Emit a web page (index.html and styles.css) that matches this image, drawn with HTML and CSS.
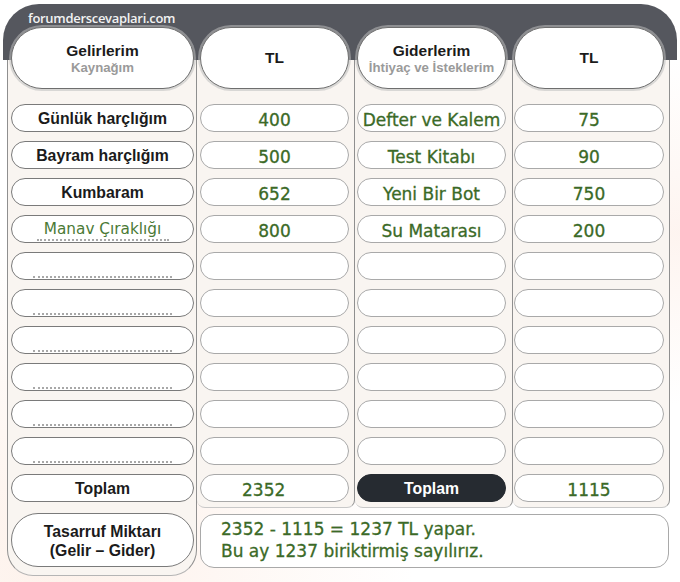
FILE: index.html
```html
<!DOCTYPE html>
<html lang="tr">
<head>
<meta charset="utf-8">
<title>Gelir Gider Tablosu</title>
<link rel="stylesheet" href="styles.css">
</head>
<body>
<div class="page">
  <div class="band"><span class="site">forumderscevaplari.com</span></div>
  <div class="sheet">
    <div class="col c1">
      <div class="head"><span class="h-title">Gelirlerim</span><span class="h-sub">Kaynağım</span></div>
      <div class="pill lbl">Günlük harçlığım</div>
      <div class="pill lbl">Bayram harçlığım</div>
      <div class="pill lbl">Kumbaram</div>
      <div class="pill lbl"><span class="dots filled">Manav Çıraklığı</span></div>
      <div class="pill lbl"><span class="dots"></span></div>
      <div class="pill lbl"><span class="dots"></span></div>
      <div class="pill lbl"><span class="dots"></span></div>
      <div class="pill lbl"><span class="dots"></span></div>
      <div class="pill lbl"><span class="dots"></span></div>
      <div class="pill lbl"><span class="dots"></span></div>
      <div class="pill lbl">Toplam</div>
      <div class="pill lbl big">Tasarruf Miktarı<br>(Gelir – Gider)</div>
    </div>
    <div class="right">
      <div class="cols">
        <div class="col c2">
          <div class="head"><span class="h-title">TL</span></div>
          <div class="pill val">400</div>
          <div class="pill val">500</div>
          <div class="pill val">652</div>
          <div class="pill val">800</div>
          <div class="pill val"></div>
          <div class="pill val"></div>
          <div class="pill val"></div>
          <div class="pill val"></div>
          <div class="pill val"></div>
          <div class="pill val"></div>
          <div class="pill val left">2352</div>
        </div>
        <div class="col c3">
          <div class="head"><span class="h-title">Giderlerim</span><span class="h-sub">İhtiyaç ve İsteklerim</span></div>
          <div class="pill val">Defter ve Kalem</div>
          <div class="pill val">Test Kitabı</div>
          <div class="pill val">Yeni Bir Bot</div>
          <div class="pill val">Su Matarası</div>
          <div class="pill val"></div>
          <div class="pill val"></div>
          <div class="pill val"></div>
          <div class="pill val"></div>
          <div class="pill val"></div>
          <div class="pill val"></div>
          <div class="pill dark">Toplam</div>
        </div>
        <div class="col c4">
          <div class="head"><span class="h-title">TL</span></div>
          <div class="pill val">75</div>
          <div class="pill val">90</div>
          <div class="pill val">750</div>
          <div class="pill val">200</div>
          <div class="pill val"></div>
          <div class="pill val"></div>
          <div class="pill val"></div>
          <div class="pill val"></div>
          <div class="pill val"></div>
          <div class="pill val"></div>
          <div class="pill val">1115</div>
        </div>
      </div>
      <div class="summary">
        <p>2352 - 1115 = 1237 TL yapar.</p>
        <p>Bu ay 1237 biriktirmiş sayılırız.</p>
      </div>
    </div>
  </div>
</div>
</body>
</html>
```
FILE: styles.css
```css
* { box-sizing: border-box; }
html, body { margin: 0; padding: 0; }
body {
  width: 680px;
  height: 582px;
  overflow: hidden;
  background: #ffffff;
  font-family: "Liberation Sans", Arial, sans-serif;
}
.page {
  width: 680px;
  height: 582px;
  background:
    radial-gradient(ellipse at 10% 95%, rgba(250, 215, 195, 0.35), rgba(255,255,255,0) 40%),
    radial-gradient(ellipse at 100% 40%, rgba(250, 220, 205, 0.3), rgba(255,255,255,0) 35%),
    #ffffff;
  padding-top: 4px;
}
.band {
  margin: 0 3px;
  height: 56px;
  background: #55575e;
  border-radius: 36px 36px 0 0;
  padding: 5px 0 0 25px;
}
.site {
  font-family: "Open Sans", sans-serif;
  font-size: 13px;
  font-weight: 600;
  color: #f2f2f2;
  letter-spacing: -0.3px;
}
.sheet {
  display: flex;
  padding-left: 7px;
}
.col {
  display: flex;
  flex-direction: column;
  background: #f9f5f1;
  border-right: 1px solid #8f8f8f;
}
.c1 {
  width: 190px;
  border-left: 1px solid #8f8f8f;
  padding: 0 2px 8px 3px;
  border-radius: 0 0 26px 26px;
  border-bottom: 1px solid #b5b5b5;
}
.right {
  display: flex;
  flex-direction: column;
}
.cols { display: flex; }
.c2, .c3, .c4 {
  width: 158px;
  padding: 0 0 5px 3px;
  border-radius: 0 0 8px 8px;
  border-bottom: 1px solid #c8c8c8;
}
.c3 { padding-left: 2px; }
.c4 { width: 157px; padding-left: 1px; }
.head {
  margin-top: -33px;
  height: 62px;
  width: 149px;
  background: #ffffff;
  border: 1.5px solid #6e6e6e;
  border-radius: 31px;
  box-shadow: 0 0 0 2px rgba(190, 190, 190, 0.55);
  display: flex;
  flex-direction: column;
  align-items: center;
  justify-content: center;
  margin-bottom: 15px;
}
.c1 .head { width: 183px; }
.c4 .head { width: 150px; }
.h-title {
  font-weight: bold;
  font-size: 15.5px;
  color: #1b1b1b;
  line-height: 18px;
}
.h-sub {
  font-weight: bold;
  font-size: 13.2px;
  color: #9a9a9a;
  line-height: 15px;
}
.pill {
  height: 28px;
  width: 149px;
  margin-bottom: 9px;
  background: #ffffff;
  border: 1.5px solid #a9a9a9;
  border-radius: 14px;
  display: flex;
  align-items: center;
  justify-content: center;
}
.pill:last-child { margin-bottom: 0; }
.c4 .pill { width: 150px; }
.c1 .pill {
  width: 183px;
  border-color: #7a7a7a;
}
.lbl {
  font-weight: bold;
  font-size: 15.8px;
  color: #1b1b1b;
  padding-top: 1px;
}
.c1 .big {
  margin-top: 2px;
  height: 54px;
  border-radius: 27px;
  line-height: 19px;
  text-align: center;
}
.dots {
  width: 139px;
  height: 18px;
  border-bottom: 2px dotted #a8a8a8;
  margin-top: 4px;
}
.dots.filled {
  width: 132px;
  height: auto;
  margin-top: 0;
  font-family: "DejaVu Sans", sans-serif;
  font-weight: normal;
  font-size: 15.3px;
  color: #4b7a36;
  line-height: 20px;
  white-space: nowrap;
  text-align: center;
}
.val {
  font-family: "DejaVu Sans", sans-serif;
  font-size: 17px;
  color: #3b6a27;
  -webkit-text-stroke: 0.3px #3b6a27;
  padding-top: 4px;
}
.val.left { justify-content: flex-start; padding-left: 41px; }
.dark {
  background: #262b31;
  border-color: #262b31;
  color: #ffffff;
  font-weight: bold;
  font-size: 15.8px;
  padding-top: 1px;
}
.summary {
  margin: 6px 1px 0 3px;
  height: 54px;
  background: #ffffff;
  border: 1.5px solid #a9a9a9;
  border-radius: 14px;
  padding: 3px 0 0 20px;
  font-family: "DejaVu Sans", sans-serif;
  font-size: 17px;
  color: #3b6a27;
  -webkit-text-stroke: 0.3px #3b6a27;
}
.summary p {
  margin: 0;
  line-height: 22px;
}
```
